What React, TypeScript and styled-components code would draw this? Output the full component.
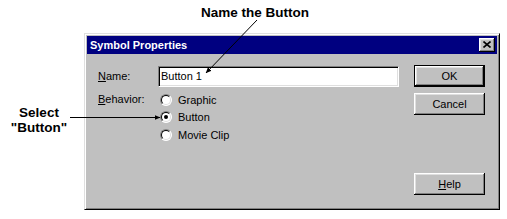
import styled, { createGlobalStyle } from 'styled-components'

const GlobalStyle = createGlobalStyle`
  html, body { margin: 0; padding: 0; background: #fff; }
  body {
    width: 507px;
    height: 219px;
    overflow: hidden;
    font-family: 'Liberation Sans', Arial, sans-serif;
  }
`

const Page = styled.div`
  position: relative;
  width: 507px;
  height: 219px;
`

const Callout = styled.div`
  font: bold 13.5px/15px 'Liberation Sans', Arial, sans-serif;
  color: #000;
`

const Header = styled(Callout)`
  height: 33px;
  padding: 5px 0 0 201px;
  box-sizing: border-box;
`

const Body = styled.div`
  display: flex;
`

const SideNote = styled(Callout)`
  width: 84px;
  padding: 72px 6px 0 0;
  box-sizing: border-box;
  text-align: center;
`

const Dialog = styled.div`
  width: 416px;
  height: 177px;
  box-sizing: border-box;
  background: #c0c0c0;
  border: 1px solid;
  border-color: #dfdfdf #000 #000 #dfdfdf;
  box-shadow: inset 1px 1px #fff, inset -1px -1px #808080;
  padding: 2px;
  display: flex;
  flex-direction: column;
  font-size: 11px;
  color: #000;
`

const TitleBar = styled.div`
  height: 18px;
  background: #000080;
  color: #fff;
  font-weight: bold;
  font-size: 11px;
  display: flex;
  align-items: center;
  justify-content: space-between;
  padding: 0 2px 0 3px;
`

const CloseBtn = styled.div`
  width: 16px;
  height: 14px;
  box-sizing: border-box;
  background: #c0c0c0;
  box-shadow: inset -1px -1px #000, inset 1px 1px #fff, inset -2px -2px #808080, inset 2px 2px #dfdfdf;
  display: flex;
  align-items: center;
  justify-content: center;
  padding-bottom: 1px;
`

const Client = styled.div`
  flex: 1;
  display: flex;
  gap: 15px;
  padding: 11px 12px 12px 11px;
`

const Form = styled.div`
  width: 301px;
  display: flex;
  flex-direction: column;
`

const Row = styled.div<{ $top?: number }>`
  display: flex;
  align-items: flex-start;
  margin-top: ${({ $top }) => $top ?? 0}px;
`

const Label = styled.div<{ $h: number }>`
  width: 60px;
  height: ${({ $h }) => $h}px;
  line-height: ${({ $h }) => $h}px;
  flex-shrink: 0;
`

const TextField = styled.input`
  width: 241px;
  height: 21px;
  box-sizing: border-box;
  margin: 0;
  padding: 0 2px 1px;
  border: 1px solid;
  border-color: #808080 #fff #fff #808080;
  box-shadow: inset 1px 1px #000, inset -1px -1px #dfdfdf;
  background: #fff;
  font: 11px 'Liberation Sans', Arial, sans-serif;
  color: #000;
  outline: none;
`

const RadioGroup = styled.div`
  display: flex;
  flex-direction: column;
`

const RadioRow = styled.div`
  height: 17.5px;
  display: flex;
  align-items: center;
  gap: 6px;
  padding-left: 2px;
`

const RadioCircle = styled.span<{ $checked?: boolean }>`
  position: relative;
  width: 12px;
  height: 12px;
  box-sizing: border-box;
  border-radius: 50%;
  border: 1px solid;
  border-color: #808080 #fff #fff #808080;
  background: #fff;
  flex-shrink: 0;

  &::before {
    content: '';
    position: absolute;
    inset: 0;
    border-radius: 50%;
    border: 1px solid;
    border-color: #000 #dfdfdf #dfdfdf #000;
  }

  &::after {
    content: '';
    display: ${({ $checked }) => ($checked ? 'block' : 'none')};
    position: absolute;
    left: 3px;
    top: 3px;
    width: 4px;
    height: 4px;
    border-radius: 50%;
    background: #000;
  }
`

const Buttons = styled.div`
  width: 71px;
  display: flex;
  flex-direction: column;
  gap: 6px;
`

const Btn = styled.div<{ $default?: boolean }>`
  height: 22px;
  box-sizing: border-box;
  display: flex;
  align-items: center;
  justify-content: center;
  background: #c0c0c0;
  border: ${({ $default }) => ($default ? '1px solid #000' : 'none')};
  box-shadow: inset -1px -1px #000, inset 1px 1px #fff, inset -2px -2px #808080, inset 2px 2px #dfdfdf;
  font-size: 11px;
  padding-bottom: 1px;
`

const HelpBtn = styled(Btn)`
  margin-top: auto;
`

const Arrows = styled.svg`
  position: absolute;
  left: 0;
  top: 0;
  pointer-events: none;
`

const RADIOS = [
  { label: 'Graphic', checked: false },
  { label: 'Button', checked: true },
  { label: 'Movie Clip', checked: false },
]

export default function App() {
  return (
    <Page>
      <GlobalStyle />
      <Header>Name the Button</Header>
      <Body>
        <SideNote>
          Select
          <br />
          "Button"
        </SideNote>
        <Dialog>
          <TitleBar>
            <span>Symbol Properties</span>
            <CloseBtn>
              <svg width="8" height="7" viewBox="0 0 8 7">
                <path d="M0.5 0.5 L7.5 6.5 M7.5 0.5 L0.5 6.5" stroke="#000" strokeWidth="1.6" fill="none" />
              </svg>
            </CloseBtn>
          </TitleBar>
          <Client>
            <Form>
              <Row $top={1}>
                <Label $h={21}>
                  <u>N</u>ame:
                </Label>
                <TextField readOnly defaultValue="Button 1" />
              </Row>
              <Row $top={4}>
                <Label $h={17.5}>
                  <u>B</u>ehavior:
                </Label>
                <RadioGroup>
                  {RADIOS.map(r => (
                    <RadioRow key={r.label}>
                      <RadioCircle $checked={r.checked} />
                      <span>{r.label}</span>
                    </RadioRow>
                  ))}
                </RadioGroup>
              </Row>
            </Form>
            <Buttons>
              <Btn $default>OK</Btn>
              <Btn>Cancel</Btn>
              <HelpBtn>
                <span>
                  <u>H</u>elp
                </span>
              </HelpBtn>
            </Buttons>
          </Client>
        </Dialog>
      </Body>
      <Arrows width="507" height="219" viewBox="0 0 507 219">
        <defs>
          <marker id="ah" markerWidth="6" markerHeight="6" refX="5.5" refY="3" orient="auto" markerUnits="userSpaceOnUse">
            <path d="M0,0.5 L6,3 L0,5.5 z" fill="#000" />
          </marker>
        </defs>
        <line x1="257" y1="20" x2="206" y2="73" stroke="#000" strokeWidth="1" markerEnd="url(#ah)" />
        <line x1="70" y1="117.5" x2="160" y2="117.5" stroke="#000" strokeWidth="1" markerEnd="url(#ah)" />
      </Arrows>
    </Page>
  )
}
